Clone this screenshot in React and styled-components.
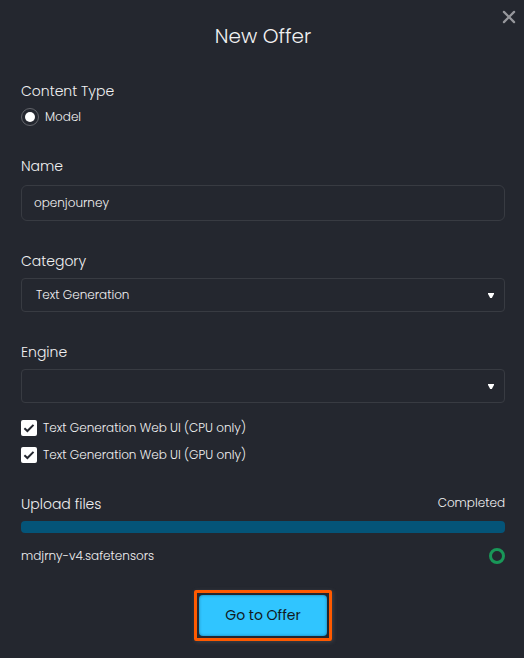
import React from "react";
import styled, { createGlobalStyle } from "styled-components";

const GlobalStyle = createGlobalStyle`
  * { box-sizing: border-box; }
  body { margin: 0; background: #24272f; }
`;

const Dialog = styled.main`
  position: relative;
  display: flex;
  flex-direction: column;
  width: 524px;
  height: 658px;
  padding: 0 19px 0 21px;
  overflow: hidden;
  background: #24272f;
  color: #f1f1f2;
  font-family: Poppins, Inter, sans-serif;
  font-weight: 300;
  font-size: 12px;
  white-space: nowrap;
`;

const CloseButton = styled.button`
  position: absolute;
  top: 10px;
  right: 8px;
  width: 14px;
  height: 14px;
  padding: 0;
  border: 0;
  background: none;
  svg { display: block; }
`;

const Title = styled.h1`
  margin: 0;
  height: 79px;
  font-size: 20px;
  font-weight: 300;
  line-height: 72px;
  text-align: center;
`;

const Field = styled.section`
  display: flex;
  flex-direction: column;
  gap: ${(p) => p.$gap || 5}px;
  margin-bottom: ${(p) => p.$after}px;
`;

const Label = styled.h2`
  margin: 0;
  font-size: 14px;
  font-weight: 300;
  line-height: 24px;
`;

const Text = styled.span`
  line-height: 18px;
`;

const Option = styled.label`
  display: flex;
  align-items: center;
  gap: 6px;
  height: ${(p) => p.$height}px;
`;

const Radio = styled.span`
  display: grid;
  place-items: center;
  width: 18px;
  height: 18px;
  border: 1px solid #63656b;
  border-radius: 50%;
  &::after {
    content: "";
    width: 10px;
    height: 10px;
    border-radius: 50%;
    background: #fff;
  }
`;

const InputBox = styled.div`
  display: flex;
  align-items: center;
  height: 36px;
  padding: 0 12px;
  border: 1px solid #383b42;
  border-radius: 6px;
`;

const SelectBox = styled.div`
  display: flex;
  align-items: center;
  justify-content: space-between;
  height: 34px;
  padding: 0 10px 0 14px;
  border: 1px solid #383b42;
  border-radius: 4px;
`;

const Checks = styled.div`
  display: flex;
  flex-direction: column;
  gap: 11px;
  margin-bottom: 29px;
`;

const CheckBox = styled.span`
  display: block;
  width: 16px;
  height: 16px;
  border-radius: 2px;
  background: #fff;
  svg { display: block; }
`;

const SplitRow = styled.div`
  display: flex;
  align-items: center;
  justify-content: space-between;
`;

const StatusText = styled(Text)`
  margin-top: -3px;
`;

const Progress = styled.div`
  height: 12px;
  border-radius: 4px;
  background: #045478;
`;

const FileRow = styled(SplitRow)`
  height: 16px;
  margin-bottom: 26px;
`;

const DoneRing = styled.span`
  width: 16px;
  height: 16px;
  border: 3px solid #199758;
  border-radius: 50%;
`;

const ActionFrame = styled.div`
  align-self: center;
  width: 138px;
  height: 51px;
  padding: 2px;
  border: 3px solid #ff5a00;
  border-radius: 2px;
  box-shadow: 1px 1px 4px rgba(150, 150, 150, 0.25);
`;

const ActionButton = styled.button`
  display: block;
  width: 128px;
  height: 41px;
  padding: 0;
  border: 0;
  border-radius: 4px;
  background: #30c5ff;
  box-shadow: inset 0 0 3px rgba(0, 50, 80, 0.5);
  color: #111820;
  font: inherit;
  font-size: 14px;
  font-weight: 400;
`;

const Arrow = () => (
  <svg width="6" height="5" viewBox="0 0 6 5" aria-hidden="true">
    <path d="M0 0H6V1L3.8 5H2.2L0 1Z" fill="#fff" />
  </svg>
);

const CheckOption = ({ children }) => (
  <Option $height={16}>
    <CheckBox>
      <svg width="16" height="16" viewBox="0 0 16 16" aria-hidden="true">
        <path d="M3.4 8.3L6.4 11L12.5 4.9" fill="none" stroke="#24272f" strokeWidth="2" />
      </svg>
    </CheckBox>
    <Text>{children}</Text>
  </Option>
);

export default function App() {
  return (
    <>
      <GlobalStyle />
      <Dialog>
        <CloseButton aria-label="Close">
          <svg width="14" height="14" viewBox="0 0 14 14">
            <path d="M1.9 1.9L12.1 12.1M12.1 1.9L1.9 12.1" stroke="#96979c" strokeWidth="2.2" strokeLinecap="round" />
          </svg>
        </CloseButton>
        <Title>New Offer</Title>
        <Field $after={28}>
          <Label>Content Type</Label>
          <Option $height={18}>
            <Radio />
            <Text>Model</Text>
          </Option>
        </Field>
        <Field $gap={7} $after={28}>
          <Label>Name</Label>
          <InputBox><Text>openjourney</Text></InputBox>
        </Field>
        <Field $after={28}>
          <Label>Category</Label>
          <SelectBox><Text>Text Generation</Text><Arrow /></SelectBox>
        </Field>
        <Field $after={17}>
          <Label>Engine</Label>
          <SelectBox><span /><Arrow /></SelectBox>
        </Field>
        <Checks>
          <CheckOption>Text Generation Web UI (CPU only)</CheckOption>
          <CheckOption>Text Generation Web UI (GPU only)</CheckOption>
        </Checks>
        <Field $after={15}>
          <SplitRow>
            <Label>Upload files</Label>
            <StatusText>Completed</StatusText>
          </SplitRow>
          <Progress />
        </Field>
        <FileRow>
          <Text>mdjrny-v4.safetensors</Text>
          <DoneRing />
        </FileRow>
        <ActionFrame><ActionButton>Go to Offer</ActionButton></ActionFrame>
      </Dialog>
    </>
  );
}
